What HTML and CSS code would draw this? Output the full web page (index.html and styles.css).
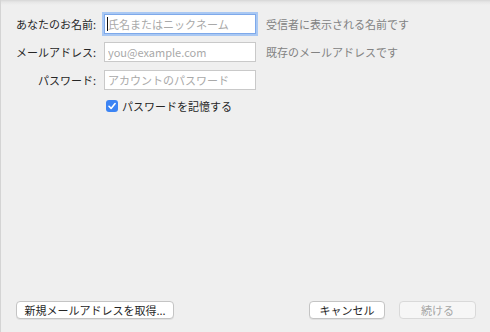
FILE: index.html
```html
<!DOCTYPE html>
<html lang="ja">
<head>
    <meta charset="UTF-8" />
    <meta name="viewport" content="width=device-width, initial-scale=1.0" />
    <link rel="stylesheet" href="styles.css">
    <title>メールアカウントの設定</title>
</head>
<body>
    <div class="sheet">
        <div class="form">
            <label class="label" for="name">あなたのお名前:</label>
            <div class="field focused">
                <input id="name" type="text" placeholder="氏名またはニックネーム">
            </div>
            <div class="hint">受信者に表示される名前です</div>

            <label class="label" for="mail">メールアドレス:</label>
            <div class="field">
                <input id="mail" type="text" placeholder="you@example.com">
            </div>
            <div class="hint">既存のメールアドレスです</div>

            <label class="label" for="pass">パスワード:</label>
            <div class="field">
                <input id="pass" type="text" placeholder="アカウントのパスワード">
            </div>
            <div class="hint"></div>

            <div class="remember">
                <span class="check">
                    <svg width="12" height="12" viewBox="0 0 12 12">
                        <rect x="0" y="0" width="12" height="12" rx="3" fill="#3c84f4"/>
                        <path d="M3 6.3 L5.1 8.4 L9.1 3.6" fill="none" stroke="#fff" stroke-width="1.6" stroke-linecap="round" stroke-linejoin="round"/>
                    </svg>
                </span>
                パスワードを記憶する
            </div>
        </div>

        <div class="actions">
            <button class="btn btn-new">新規メールアドレスを取得...</button>
            <div class="spacer"></div>
            <button class="btn btn-cancel">キャンセル</button>
            <button class="btn btn-next" disabled>続ける</button>
        </div>
    </div>
</body>
</html>
```

FILE: styles.css
```css
* {
    box-sizing: border-box;
}

html, body {
    margin: 0;
    padding: 0;
}

body {
    font-family: "Noto Sans CJK JP", "Liberation Sans", sans-serif;
    font-size: 11px;
    color: #262626;
    background-color: #efefef;
}

.sheet {
    height: 332px;
    display: flex;
    flex-direction: column;
    border-left: 1px solid #d4d4d4;
    background: linear-gradient(to bottom, #d6d6d6 0px, #e6e6e6 2px, #efefef 5px, #efefef 100%);
}

.form {
    display: grid;
    grid-template-columns: 95px 152px auto;
    column-gap: 8px;
    row-gap: 8px;
    align-items: center;
    padding-top: 14px;
}

.label {
    text-align: right;
    line-height: 20px;
    color: #262626;
}

.field {
    position: relative;
    height: 20px;
}

.field input {
    display: block;
    width: 100%;
    height: 20px;
    margin: 0;
    padding: 0 0 0 3px;
    border: 1px solid #c9c9c9;
    background-color: #fff;
    font-family: inherit;
    font-size: 11px;
    color: #262626;
    outline: none;
}

.field input::placeholder {
    color: #a9a9a9;
}

.focused input {
    border-color: #7ea9ea;
    box-shadow: 0 0 0 2px #a9c8f3;
}

.focused::after {
    content: "";
    position: absolute;
    left: 3px;
    top: 3px;
    width: 1px;
    height: 14px;
    background-color: #111;
}

.hint {
    padding-left: 2px;
    color: #828282;
    line-height: 20px;
}

.remember {
    grid-column: 2 / 4;
    display: flex;
    align-items: center;
    gap: 4px;
    margin-top: 1px;
    padding-left: 2px;
    line-height: 14px;
    color: #262626;
}

.check {
    display: flex;
}

.actions {
    margin-top: auto;
    display: flex;
    align-items: center;
    gap: 14px;
    padding: 0 14px 13px 15px;
}

.spacer {
    flex: 1;
}

.btn {
    height: 18px;
    padding: 0;
    font-family: inherit;
    font-size: 11px;
    line-height: 16px;
    white-space: nowrap;
    color: #262626;
    background-color: #fff;
    border: 1px solid #c4c4c4;
    border-radius: 4px;
    box-shadow: 0 1px 0 rgba(0, 0, 0, 0.06);
}

.btn-new {
    width: 158px;
}

.btn-cancel {
    width: 76px;
}

.btn-next {
    width: 77px;
    color: #a6a6a6;
    background-color: #f6f6f6;
    border-color: #d9d9d9;
    box-shadow: none;
}
```
